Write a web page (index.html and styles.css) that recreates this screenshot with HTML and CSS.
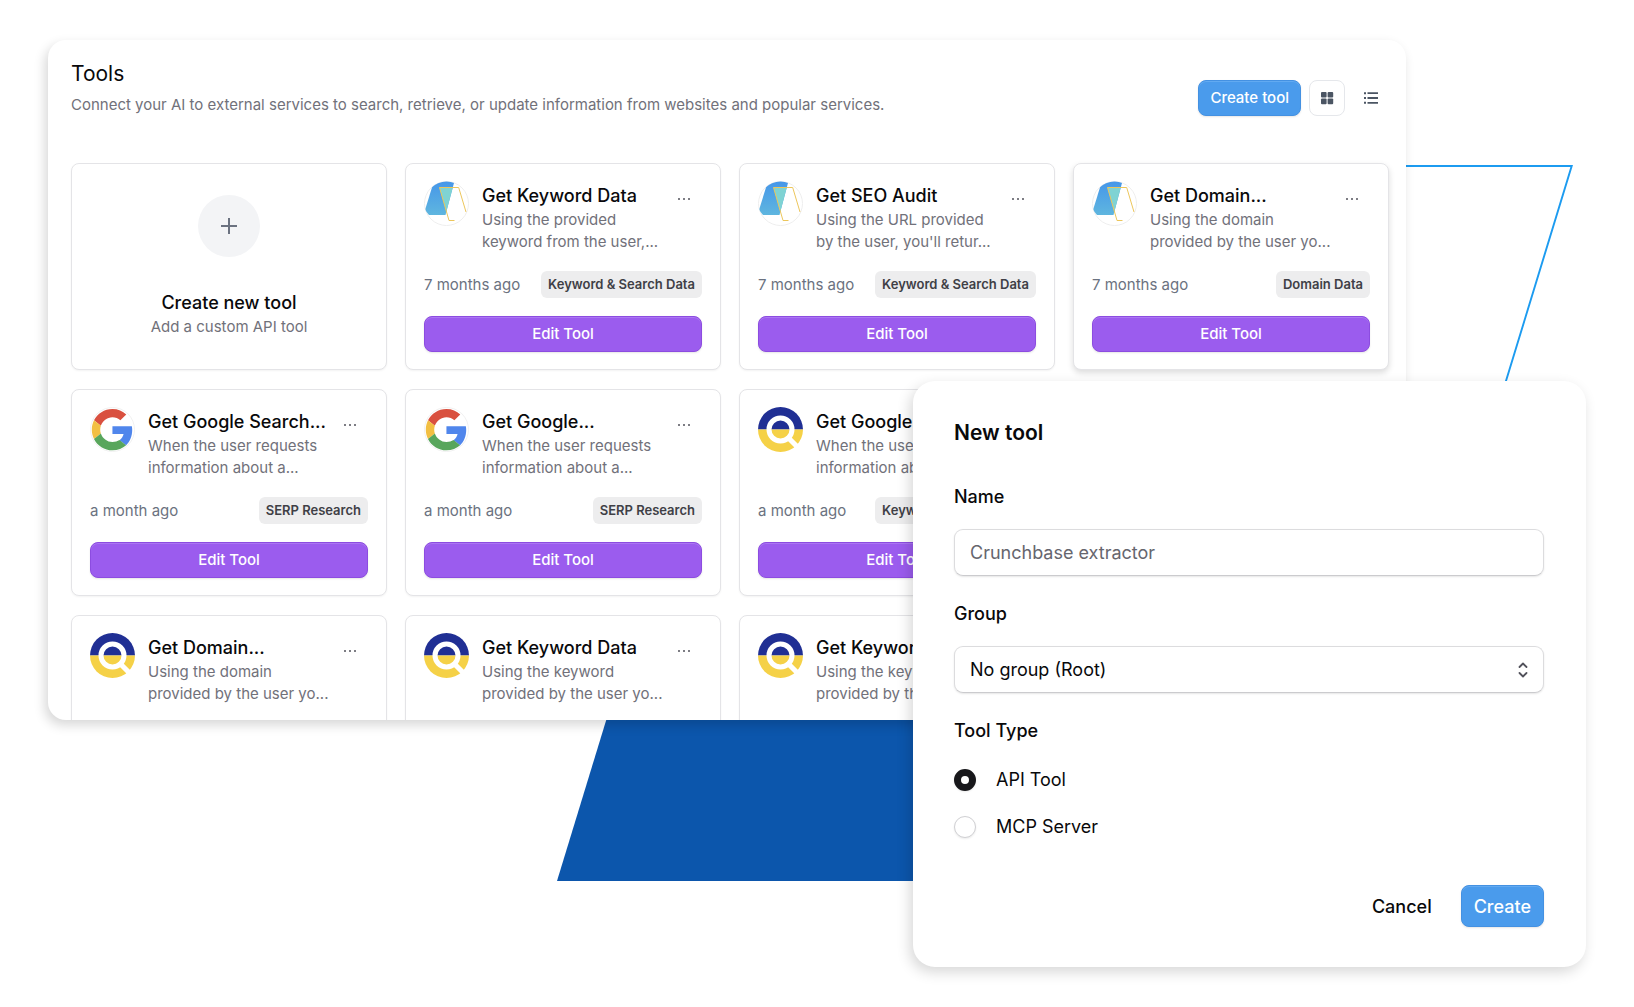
FILE: index.html
```html
<!DOCTYPE html>
<html lang="en">
<head>
  <meta charset="UTF-8">
  <meta name="viewport" content="width=device-width, initial-scale=1.0">
  <title>Tools</title>
  <link rel="stylesheet" href="styles.css">
</head>
<body>
  <!-- shared icons -->
  <svg class="sprite" aria-hidden="true">
    <symbol id="icon-site" viewBox="0 0 45 45">
      <clipPath id="round"><circle cx="22.5" cy="22.5" r="22"/></clipPath>
      <linearGradient id="sky" x1="0" y1="0" x2="0" y2="1">
        <stop offset="0" stop-color="#4596e9"/>
        <stop offset="1" stop-color="#5fb6df"/>
      </linearGradient>
      <circle cx="22.5" cy="22.5" r="22" fill="#fff" stroke="#eeeeee"/>
      <g clip-path="url(#round)">
        <path d="M10 0H30.5L21.5 34H5L1 29z" fill="url(#sky)"/>
        <path d="M15.5 6.5H28.8L22.3 30.5z" fill="#7fd3d3"/>
        <path d="M30.5 39.5H25L15.5 6.5H34.7L42 31" fill="none" stroke="#ecc65c"/>
      </g>
    </symbol>
    <symbol id="icon-google" viewBox="0 0 45 45">
      <circle cx="22.5" cy="22.5" r="22" fill="#fff" stroke="#f1f1f1"/>
      <g transform="translate(1.8 2) scale(.86)">
        <path fill="#d9503f" d="M24 9.5c3.54 0 6.71 1.22 9.21 3.6l6.85-6.85C35.9 2.38 30.47 0 24 0 14.62 0 6.51 5.38 2.56 13.22l7.98 6.19C12.43 13.72 17.74 9.5 24 9.5z"/>
        <path fill="#5086ec" d="M46.98 24.55c0-1.57-.15-3.09-.38-4.55H24v9.02h12.94c-.58 2.96-2.26 5.48-4.78 7.18l7.73 6c4.51-4.18 7.09-10.36 7.09-17.65z"/>
        <path fill="#f2bf42" d="M10.53 28.59c-.48-1.45-.76-2.99-.76-4.59s.27-3.14.76-4.59l-7.98-6.19C.92 16.46 0 20.12 0 24c0 3.88.92 7.54 2.56 10.78l7.97-6.19z"/>
        <path fill="#58a65c" d="M24 48c6.48 0 11.93-2.13 15.89-5.81l-7.73-6c-2.15 1.45-4.92 2.3-8.16 2.3-6.26 0-11.57-4.22-13.47-9.91l-7.98 6.19C6.51 42.62 14.62 48 24 48z"/>
      </g>
    </symbol>
    <symbol id="icon-search" viewBox="0 0 45 45">
      <path d="M0 22.5a22.5 22.5 0 0 1 45 0z" fill="#202f94"/>
      <path d="M0 22.5a22.5 22.5 0 0 0 45 0z" fill="#f5d147"/>
      <circle cx="22.5" cy="22.5" r="11.5" fill="none" stroke="#fff" stroke-width="5"/>
      <path d="M30 30.500L40 40.500" stroke="#fff" stroke-width="5.2"/>
    </symbol>
    <symbol id="icon-dots" viewBox="0 0 14 4">
      <circle cx="2" cy="2" r="1" /><circle cx="7" cy="2" r="1" /><circle cx="12" cy="2" r="1" />
    </symbol>
  </svg>

  <div class="stage">
    <div class="shape shape-outline"></div>
    <div class="shape shape-solid"></div>

    <main class="panel">
      <header class="panel-header">
        <div>
          <h1>Tools</h1>
          <p>Connect your AI to external services to search, retrieve, or update information from websites and popular services.</p>
        </div>
        <div class="actions">
          <button type="button" class="btn btn-blue">Create tool</button>
          <button type="button" class="view-btn active" aria-label="Grid view">
            <svg width="14" height="14" viewBox="0 0 14 14"><rect x="1" y="1" width="5.6" height="5.6" rx="1"/><rect x="7.6" y="1" width="5.6" height="5.6" rx="1"/><rect x="1" y="7.6" width="5.6" height="5.6" rx="1"/><rect x="7.6" y="7.6" width="5.6" height="5.6" rx="1"/></svg>
          </button>
          <button type="button" class="view-btn" aria-label="List view">
            <svg width="16" height="14" viewBox="0 0 16 14"><path d="M1 1.2h2v2H1zM1 6h2v2H1zM1 10.8h2v2H1zM4.5 1.3H15v1.8H4.5zM4.5 6.1H15v1.8H4.5zM4.5 10.9H15v1.8H4.5z"/></svg>
          </button>
        </div>
      </header>

      <div class="grid">
        <section class="card card-new">
          <div class="plus">
            <svg width="18" height="18" viewBox="0 0 18 18"><path d="M9 1v16M1 9h16" fill="none" stroke="#6b7280" stroke-width="2"/></svg>
          </div>
          <h2>Create new tool</h2>
          <p>Add a custom API tool</p>
        </section>

        <section class="card">
          <div class="card-top">
            <svg class="avatar"><use href="#icon-site"/></svg>
            <div class="card-text">
              <h2>Get Keyword Data</h2>
              <p>Using the provided<br>keyword from the user,...</p>
            </div>
            <button type="button" class="more" aria-label="More"><svg><use href="#icon-dots"/></svg></button>
          </div>
          <div class="meta"><span>7 months ago</span><span class="tag">Keyword &amp; Search Data</span></div>
          <button type="button" class="btn btn-purple">Edit Tool</button>
        </section>

        <section class="card">
          <div class="card-top">
            <svg class="avatar"><use href="#icon-site"/></svg>
            <div class="card-text">
              <h2>Get SEO Audit</h2>
              <p>Using the URL provided<br>by the user, you'll retur...</p>
            </div>
            <button type="button" class="more" aria-label="More"><svg><use href="#icon-dots"/></svg></button>
          </div>
          <div class="meta"><span>7 months ago</span><span class="tag">Keyword &amp; Search Data</span></div>
          <button type="button" class="btn btn-purple">Edit Tool</button>
        </section>

        <section class="card raised">
          <div class="card-top">
            <svg class="avatar"><use href="#icon-site"/></svg>
            <div class="card-text">
              <h2>Get Domain...</h2>
              <p>Using the domain<br>provided by the user yo...</p>
            </div>
            <button type="button" class="more" aria-label="More"><svg><use href="#icon-dots"/></svg></button>
          </div>
          <div class="meta"><span>7 months ago</span><span class="tag">Domain Data</span></div>
          <button type="button" class="btn btn-purple">Edit Tool</button>
        </section>

        <section class="card">
          <div class="card-top">
            <svg class="avatar"><use href="#icon-google"/></svg>
            <div class="card-text">
              <h2>Get Google Search...</h2>
              <p>When the user requests<br>information about a...</p>
            </div>
            <button type="button" class="more" aria-label="More"><svg><use href="#icon-dots"/></svg></button>
          </div>
          <div class="meta"><span>a month ago</span><span class="tag">SERP Research</span></div>
          <button type="button" class="btn btn-purple">Edit Tool</button>
        </section>

        <section class="card">
          <div class="card-top">
            <svg class="avatar"><use href="#icon-google"/></svg>
            <div class="card-text">
              <h2>Get Google...</h2>
              <p>When the user requests<br>information about a...</p>
            </div>
            <button type="button" class="more" aria-label="More"><svg><use href="#icon-dots"/></svg></button>
          </div>
          <div class="meta"><span>a month ago</span><span class="tag">SERP Research</span></div>
          <button type="button" class="btn btn-purple">Edit Tool</button>
        </section>

        <section class="card">
          <div class="card-top">
            <svg class="avatar"><use href="#icon-search"/></svg>
            <div class="card-text">
              <h2>Get Google...</h2>
              <p>When the user requests<br>information about a...</p>
            </div>
          </div>
          <div class="meta"><span>a month ago</span><span class="tag">Keyword &amp; Search Data</span></div>
          <button type="button" class="btn btn-purple">Edit Tool</button>
        </section>

        <section class="card row-start">
          <div class="card-top">
            <svg class="avatar"><use href="#icon-search"/></svg>
            <div class="card-text">
              <h2>Get Domain...</h2>
              <p>Using the domain<br>provided by the user yo...</p>
            </div>
            <button type="button" class="more" aria-label="More"><svg><use href="#icon-dots"/></svg></button>
          </div>
        </section>

        <section class="card">
          <div class="card-top">
            <svg class="avatar"><use href="#icon-search"/></svg>
            <div class="card-text">
              <h2>Get Keyword Data</h2>
              <p>Using the keyword<br>provided by the user yo...</p>
            </div>
            <button type="button" class="more" aria-label="More"><svg><use href="#icon-dots"/></svg></button>
          </div>
        </section>

        <section class="card">
          <div class="card-top">
            <svg class="avatar"><use href="#icon-search"/></svg>
            <div class="card-text">
              <h2>Get Keyword Data</h2>
              <p>Using the keyword<br>provided by the user yo...</p>
            </div>
          </div>
        </section>
      </div>
    </main>

    <form class="dialog">
      <h2>New tool</h2>

      <label class="field-label" for="name">Name</label>
      <input class="control" type="text" id="name" placeholder="Crunchbase extractor">

      <label class="field-label" for="group">Group</label>
      <div class="select-wrap">
        <select class="control" id="group">
          <option>No group (Root)</option>
        </select>
        <svg width="12" height="18" viewBox="0 0 12 18"><path d="M2.500 6L6 2.500 9.500 6M2.500 12L6 15.500 9.500 12" fill="none" stroke="#52525b" stroke-width="1.800" stroke-linecap="round" stroke-linejoin="round"/></svg>
      </div>

      <fieldset>
        <legend class="field-label">Tool Type</legend>
        <label class="radio"><input type="radio" name="type" checked> API Tool</label>
        <label class="radio"><input type="radio" name="type"> MCP Server</label>
      </fieldset>

      <div class="dialog-footer">
        <button type="button" class="btn btn-plain">Cancel</button>
        <button type="button" class="btn btn-blue">Create</button>
      </div>
    </form>
  </div>
</body>
</html>
```

FILE: styles.css
```css
* {
  box-sizing: border-box;
}
body {
  margin: 0;
  background: #fff;
  color: #09090b;
  font-family: Inter, "Liberation Sans", sans-serif;
  font-size: 15px;
}
h1, h2, p, fieldset {
  margin: 0;
  padding: 0;
  border: 0;
}
button, input, select {
  font-family: inherit;
}
.sprite {
  position: absolute;
  width: 0;
  height: 0;
}
.stage {
  position: relative;
  min-height: 100vh;
  padding: 40px 228px 0 48px;
  overflow: hidden;
}

/* slanted shapes behind the windows */
.shape {
  position: absolute;
  transform: skewX(-17deg);
}
.shape-outline {
  top: 165px;
  right: 61px;
  width: 400px;
  height: 400px;
  border: 2px solid #1c9bf0;
  transform-origin: top right;
}
.shape-solid {
  left: 557px;
  bottom: 126px;
  width: 600px;
  height: 400px;
  background: #0c56ac;
  transform-origin: bottom left;
}

/* tools panel */
.panel {
  position: relative;
  height: calc(100vh - 327px);
  padding: 22px 17px 0 23px;
  overflow: hidden;
  background: #fff;
  border-radius: 18px;
  box-shadow: -3px 5px 12px rgba(0, 0, 0, 0.16);
}
.panel-header {
  display: flex;
  justify-content: space-between;
  align-items: flex-start;
  margin-bottom: 46px;
}
.panel-header h1 {
  font-size: 21px;
  font-weight: 400;
  line-height: 24px;
}
.panel-header p {
  margin-top: 7px;
  color: #71717a;
  line-height: 24px;
}
.actions {
  display: flex;
  gap: 8px;
  padding-top: 18px;
}
.btn {
  height: 36px;
  padding: 0 11px 2px;
  border: 1px solid transparent;
  border-radius: 8px;
  color: #fff;
  font-size: 15px;
  font-weight: 500;
}
.btn-blue {
  background: #4a9bec;
  border-color: #4491e2;
  box-shadow: inset 0 1px 0 #62aaf1, 0 1px 2px rgba(0, 0, 0, 0.1);
}
.btn-purple {
  width: 100%;
  background: #9b5cee;
  border-color: #8c4ce0;
  box-shadow: inset 0 1px 0 #ab75f3, 0 1px 2px rgba(0, 0, 0, 0.1);
}
.view-btn {
  display: flex;
  align-items: center;
  justify-content: center;
  width: 36px;
  height: 36px;
  padding: 0;
  background: none;
  border: 1px solid transparent;
  border-radius: 8px;
  fill: #4b5563;
}
.view-btn.active {
  border-color: #e5e7eb;
}

/* cards */
.grid {
  display: grid;
  grid-template-columns: repeat(4, 1fr);
  grid-auto-rows: 207px;
  gap: 19px 18px;
}
.card {
  min-width: 0;
  padding: 17px 18px;
  background: #fff;
  border: 1px solid #e4e4e7;
  border-radius: 8px;
  box-shadow: 0 1px 2px rgba(0, 0, 0, 0.05);
}
.card.raised {
  box-shadow: 0 3px 6px rgba(0, 0, 0, 0.14);
}
.row-start {
  grid-column-start: 1;
}
.card h2 {
  font-size: 18px;
  font-weight: 500;
  line-height: 24px;
}
.card p {
  margin-top: 1px;
  color: #71717a;
  line-height: 22px;
}
.card-new {
  display: flex;
  flex-direction: column;
  align-items: center;
  padding-top: 31px;
}
.plus {
  display: flex;
  align-items: center;
  justify-content: center;
  width: 62px;
  height: 62px;
  margin-bottom: 34px;
  background: #f3f4f6;
  border-radius: 50%;
}
.card-top {
  display: flex;
  gap: 13px;
  height: 90px;
}
.avatar {
  flex: none;
  width: 45px;
  height: 45px;
}
.card-text {
  flex: 1;
  min-width: 0;
  padding-top: 3px;
  white-space: nowrap;
}
.more {
  flex: none;
  width: 14px;
  height: 36px;
  margin-right: 11px;
  padding: 0;
  background: none;
  border: 0;
  fill: #52525b;
}
.more svg {
  display: block;
  width: 14px;
  height: 4px;
}
.meta {
  display: flex;
  justify-content: space-between;
  align-items: center;
  margin-bottom: 18px;
  color: #6b7280;
}
.tag {
  padding: 0 7px;
  background: #ededee;
  border-radius: 6px;
  color: #3f3f46;
  font-size: 13px;
  font-weight: 600;
  line-height: 27px;
}

/* new tool dialog */
.dialog {
  position: absolute;
  right: 48px;
  bottom: 40px;
  width: 673px;
  padding: 40px 42px 40px 41px;
  background: #fff;
  border-radius: 22px;
  box-shadow: -3px 5px 14px rgba(0, 0, 0, 0.16);
  font-size: 18px;
}
.dialog h2 {
  margin-bottom: 40px;
  font-size: 21px;
  font-weight: 600;
  line-height: 24px;
}
.field-label {
  display: block;
  margin-bottom: 20px;
  padding: 0;
  font-weight: 500;
  line-height: 24px;
}
legend.field-label {
  margin-bottom: 25px;
}
.control {
  display: block;
  width: 100%;
  height: 47px;
  margin-bottom: 26px;
  padding: 0 15px;
  background: #fff;
  border: 1px solid #dcdcde;
  border-bottom-color: #cbcbce;
  border-radius: 9px;
  box-shadow: 0 1px 2px rgba(0, 0, 0, 0.1);
  color: #09090b;
  font-size: 18px;
  appearance: none;
}
.control::placeholder {
  color: #66666e;
}
.select-wrap {
  position: relative;
}
.select-wrap svg {
  position: absolute;
  top: 15px;
  right: 15px;
  pointer-events: none;
}
.radio {
  display: flex;
  align-items: center;
  gap: 20px;
  margin-bottom: 23px;
  line-height: 24px;
}
.radio input {
  width: 22px;
  height: 22px;
  margin: 0;
  background: #fff;
  border: 1px solid #d0d0d3;
  border-radius: 50%;
  box-shadow: 0 1px 2px rgba(0, 0, 0, 0.08);
  appearance: none;
}
.radio input:checked {
  border: 7px solid #18181b;
}
.dialog-footer {
  display: flex;
  justify-content: flex-end;
  gap: 18px;
  margin-top: 23px;
}
.dialog-footer .btn {
  height: 42px;
  padding: 0 12px;
  font-size: 18px;
}
.dialog-footer .btn-plain {
  padding: 0 10px;
  background: none;
  color: #09090b;
}
```
